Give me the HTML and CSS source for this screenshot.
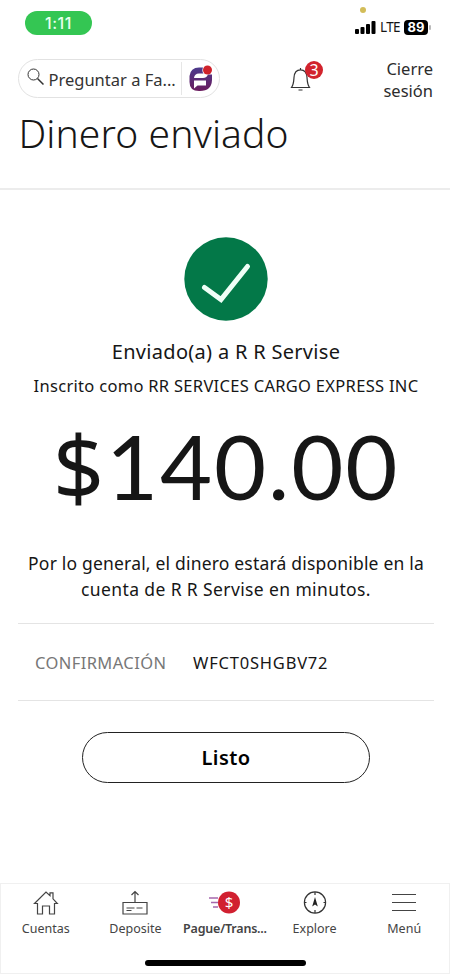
FILE: index.html
```html
<!DOCTYPE html>
<html lang="es">
<head>
<meta charset="utf-8">
<meta name="viewport" content="width=device-width">
<title>Dinero enviado</title>
<link rel="stylesheet" href="styles.css">
</head>
<body>
<div class="status">
  <span class="clock">1:11</span>
  <div class="signals">
    <i class="mic"></i>
    <svg width="21" height="13" viewBox="0 0 21 13"><rect x="0" y="8" width="4" height="5" rx="1"/><rect x="5.5" y="6" width="4" height="7" rx="1"/><rect x="11" y="3" width="4" height="10" rx="1"/><rect x="16.5" y="0" width="4" height="13" rx="1"/></svg>
    <span class="lte">LTE</span>
    <span class="battery">89</span><i class="cap"></i>
  </div>
</div>
<header class="top">
  <div class="search">
    <svg class="glass" width="18" height="18" viewBox="0 0 18 18" fill="none" stroke="#333"><circle cx="6.5" cy="6.5" r="5.5"/><path d="M10.5 10.5l6 6" stroke-width="1.5"/></svg>
    <span class="ask">Preguntar a Fa...</span>
    <svg class="fargo" width="26" height="28" viewBox="0 0 26 28"><defs><linearGradient id="g" x1="0" y1="0" x2="0" y2="1"><stop offset="0" stop-color="#4c3a8c"/><stop offset="1" stop-color="#6b1c5e"/></linearGradient></defs><path fill="url(#g)" d="M15 2.500H11Q2.500 2.500 1.500 11V17Q1.500 26 11 26H12Q23.500 26 24 15V9.500H20Q18.500 13 15 13H6Q6.500 8.500 11 8.500H15.500Q13.500 6 15 2.500z"/><path fill="#fff" d="M6 15.500h12v5H9.500l-3.500 3z"/><circle cx="19.500" cy="5" r="4.500" fill="#cf222b"/></svg>
  </div>
  <div class="bell">
    <svg width="22" height="26" viewBox="0 0 22 26" fill="none" stroke="#333" stroke-width="1.200"><path d="M1.500 22.500c2.200-3 2.200-6 2.500-10C4.300 7.500 7 4.800 10.500 4.800s6.200 2.700 6.500 7.700c.3 4 .3 7 2.500 10zM8.500 25h4M10.500 4.500V3"/></svg>
    <span class="count">3</span>
  </div>
  <a class="signoff">Cierre<br>sesión</a>
</header>
<h1>Dinero enviado</h1>
<main>
  <svg class="check" width="84" height="84" viewBox="0 0 84 84"><circle cx="42" cy="42" r="41.700" fill="#037848"/><path d="M20.500 50.500L37 62.500l26.500-33" fill="none" stroke="#effff7" stroke-width="5" stroke-linecap="round"/></svg>
  <p class="sent">Enviado(a) a R R Servise</p>
  <p class="enrolled">Inscrito como RR SERVICES CARGO EXPRESS INC</p>
  <p class="amount"><span class="sign">$</span>140.00</p>
  <p class="note">Por lo general, el dinero estará disponible en la<br><span class="wide">cuenta de R R Servise en minutos.</span></p>
  <dl class="confirm"><dt>CONFIRMACIÓN</dt><dd>WFCT0SHGBV72</dd></dl>
  <button class="done">Listo</button>
</main>
<footer>
  <nav>
    <a><svg width="26" height="26" viewBox="0 0 26 26" fill="none" stroke="#444" stroke-width="1.200"><path d="M4.500 13.500v10.500h5v-8h7v8h5V13.500h2.800L20 8.800V2.800h-3v2.800L13 2 1.500 13.500z"/></svg><span>Cuentas</span></a>
    <a><svg width="26" height="26" viewBox="0 0 26 26" fill="none" stroke="#444" stroke-width="1.200"><path d="M1 12.500h24V24H1zM13 12V1.500M9.500 5L13 1.500 16.500 5M4.500 18h8M14.500 18h6M4.500 20.500h5"/></svg><span>Deposite</span></a>
    <a class="active"><svg width="32" height="26" viewBox="0 0 32 26"><path d="M0 8h9M2 12.500h7M4 17h5" stroke="#a568ad" stroke-width="1.300"/><circle cx="20" cy="12.500" r="11" fill="#d12030"/><text x="20" y="18" text-anchor="middle" class="dollar">$</text></svg><span>Pague/Trans...</span></a>
    <a><svg width="26" height="26" viewBox="0 0 26 26" fill="none" stroke="#333" stroke-width="1.200"><circle cx="13" cy="12.500" r="10.600"/><path d="M13 2v3M13 20v3M2.500 12.500h2M21.500 12.500h2"/><path d="M13 7l2.800 9.500-2.800-2-2.800 2z" fill="#222" stroke="none"/></svg><span>Explore</span></a>
    <a><svg width="26" height="26" viewBox="0 0 26 26" stroke="#444"><path d="M1 4.500h24M1 12.500h24M1 20.500h24"/></svg><span>Menú</span></a>
  </nav>
  <div class="home"></div>
</footer>
</body>
</html>
```
FILE: styles.css
```css
* { box-sizing: border-box; }
body { margin: 0; width: 450px; height: 974px; overflow: hidden; display: flex; flex-direction: column; background: #fff; color: #161616; font-family: "Noto Sans", sans-serif; }
p, h1, dl, dd { margin: 0; }
svg { display: block; flex: none; }
.status { height: 50px; flex: none; display: flex; justify-content: space-between; align-items: flex-start; padding: 11px 19px 0 25px; }
.clock { width: 67px; height: 24px; border-radius: 12px; background: #34c653; color: #e9ffed; font: 500 16px/24px Inter, sans-serif; text-align: center; letter-spacing: .6px; }
.signals { position: relative; display: flex; align-items: center; height: 16px; margin-top: 8px; }
.mic { position: absolute; left: 5px; top: -12px; width: 6px; height: 6px; border-radius: 50%; background: #d3bd59; }
.lte { width: 24px; margin-left: 4px; font: 400 13.500px/16px "Noto Sans", sans-serif; letter-spacing: -.6px; }
.battery { width: 24px; height: 15px; border-radius: 4px; background: #000; color: #fff; font: 700 13px/15px Inter, sans-serif; text-align: center; }
.cap { width: 2px; height: 5px; margin-left: 1px; background: #bbb; border-radius: 1px; }
.top { height: 56px; flex: none; display: flex; padding: 9px 17px 0 18px; }
.search { width: 202px; height: 39px; border: 1px solid #e2e2e2; border-radius: 20px; display: flex; align-items: center; padding-left: 8px; }
.glass { margin-top: -3px; }
.ask { width: 133px; height: 33px; margin-left: 3.500px; line-height: 35px; border-right: 1px solid #e6e6e6; font-size: 16.500px; white-space: nowrap; color: #333; }
.fargo { margin-left: 6px; }
.bell { position: relative; width: 34px; height: 34px; margin-left: 70px; padding-top: 6px; }
.count { position: absolute; left: 15px; top: 2px; width: 18px; height: 18px; border-radius: 50%; background: #d2232d; color: #fff; font-size: 16px; line-height: 18px; text-align: center; }
.signoff { margin-left: auto; margin-top: -1px; text-align: right; font-size: 16.500px; line-height: 22px; color: #2c2c2c; }
h1 { height: 84px; flex: none; padding-left: 18.500px; border-bottom: 2px solid #ececec; font: 300 39px/53px "Noto Sans", sans-serif; letter-spacing: .1px; }
main { flex: 1; padding: 47px 16px 0 18px; display: flex; flex-direction: column; align-items: center; text-align: center; white-space: nowrap; }
.sent { margin-top: 17px; font-size: 20px; line-height: 28px; letter-spacing: .3px; }
.enrolled { margin-top: 9px; font-size: 16.500px; line-height: 22px; letter-spacing: .3px; }
.amount { height: 100px; margin-top: 18px; font: 400 90px/100px Lato, sans-serif; letter-spacing: 1.800px; }
.sign { font: 400 90px/100px "Noto Sans", sans-serif; }
.note { margin-top: 36px; font-size: 17.500px; line-height: 25.500px; letter-spacing: .19px; }
.wide { letter-spacing: .38px; }
.confirm { width: 416px; height: 78px; margin-top: 21px; border: solid #e4e4e4; border-width: 1px 0; display: flex; align-items: center; padding-left: 17px; font-size: 16.500px; }
dt { width: 158px; text-align: left; color: #777; letter-spacing: .4px; }
dd { letter-spacing: .8px; }
.done { width: 288px; height: 51px; margin-top: 31px; border: 1.200px solid #222; border-radius: 26px; background: #fff; color: #000; font: 600 20px "Noto Sans", sans-serif; letter-spacing: .4px; }
footer { height: 91px; flex: none; border: 1px solid #f0f0f0; }
nav { display: grid; grid-template-columns: repeat(5, 1fr); padding-top: 6px; }
nav a { display: flex; flex-direction: column; align-items: center; font-size: 12.500px; line-height: 20px; color: #444; white-space: nowrap; }
nav span { margin-top: 3px; }
.active { font-weight: 600; letter-spacing: -.2px; }
.dollar { font: 400 15px "Noto Sans", sans-serif; fill: #fff; }
.home { width: 161px; height: 6px; margin: 21px auto 0; border-radius: 3px; background: #000; }
```
